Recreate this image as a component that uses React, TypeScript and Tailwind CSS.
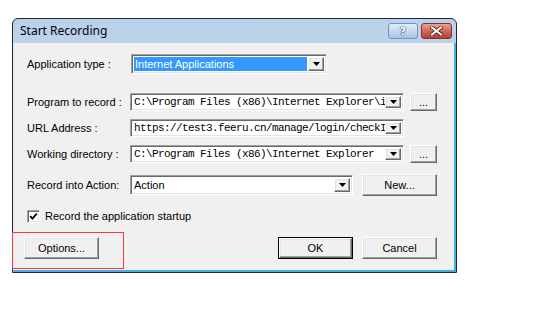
import React from 'react';

const sunken =
  'border border-t-[#a0a0a0] border-l-[#a0a0a0] border-r-white border-b-white shadow-[inset_1px_1px_0_#696969,inset_-1px_-1px_0_#e3e3e3]';
const raised =
  'border border-t-white border-l-white border-r-[#696969] border-b-[#696969] shadow-[inset_-1px_-1px_0_#a0a0a0,inset_1px_1px_0_#e3e3e3] bg-[#f0f0f0]';

const Arrow: React.FC = () => (
  <div className={`${raised} w-[16px] h-full flex items-center justify-center shrink-0`}>
    <svg width="7" height="4" viewBox="0 0 7 4">
      <path d="M0 0H7L3.5 4Z" fill="#000" />
    </svg>
  </div>
);

const Combo: React.FC<{ text: string; mono?: boolean; w: string; h?: string; selected?: boolean }> = ({
  text,
  mono,
  w,
  h = 'h-[18px]',
  selected,
}) => (
  <div className={`${sunken} ${w} ${h} bg-white flex p-[2px] shrink-0`}>
    <div
      className={`flex-1 min-w-0 overflow-hidden whitespace-nowrap flex items-center ${
        selected ? 'bg-[#3399ff] text-white mr-[1px] pl-[1px]' : 'text-black pl-[1px]'
      } ${mono ? "font-['Liberation_Mono',monospace] text-[11px] tracking-[-0.6px]" : ''}`}
    >
      {text}
    </div>
    <Arrow />
  </div>
);

const Button: React.FC<{ label: string; w?: string; h?: string; def?: boolean }> = ({
  label,
  w = 'w-[75px]',
  h = 'h-[22px]',
  def,
}) =>
  def ? (
    <div className={`${w} ${h} border border-black flex shrink-0`}>
      <div className={`${raised} flex-1 flex items-center justify-center`}>{label}</div>
    </div>
  ) : (
    <div className={`${raised} ${w} ${h} flex items-center justify-center shrink-0`}>{label}</div>
  );

const Label: React.FC<{ children: React.ReactNode }> = ({ children }) => (
  <div className="w-[103px] shrink-0 whitespace-nowrap">{children}</div>
);

export default function App() {
  return (
    <div className="w-[539px] h-[315px] bg-white pt-[18px] pl-[12px] font-['Liberation_Sans',Arial,sans-serif] text-[11px] text-black">
      {/* Window */}
      <div className="w-[445px] h-[255px] border border-[#222a33] rounded-t-[6px] flex flex-col bg-gradient-to-b from-[#b9d1ea] to-[#d5e3f2]">
        {/* Title bar */}
        <div className="h-[24px] flex items-start shrink-0">
          <div className="pl-[7px] pt-[4px] font-['Noto_Sans',sans-serif] text-[12px] leading-[16px] text-black flex-1">
            Start Recording
          </div>
          <div className="flex gap-[3px] pt-[4px] pr-[4px]">
            <div className="w-[30px] h-[16px] rounded-[3px] border border-[#7590b8] bg-gradient-to-b from-[#e4edf8] via-[#c5d7ee] to-[#a9c3e4] flex items-center justify-center">
              <span className="font-['DejaVu_Sans',sans-serif] font-bold text-[11px] leading-none text-white [text-shadow:0_0_1px_#2c3f5e,0_0_1px_#2c3f5e,0_0_1px_#2c3f5e]">
                ?
              </span>
            </div>
            <div className="w-[31px] h-[16px] rounded-[3px] border border-[#7a3530] bg-gradient-to-b from-[#e8a496] via-[#d0685a] to-[#b8402f] flex items-center justify-center">
              <svg width="13" height="10" viewBox="0 0 13 10">
                <path d="M2 1.5L11 8.5M11 1.5L2 8.5" stroke="#4a1d18" strokeWidth="3.6" strokeLinecap="square" />
                <path d="M2 1.5L11 8.5M11 1.5L2 8.5" stroke="#fff" strokeWidth="2" strokeLinecap="square" />
              </svg>
            </div>
          </div>
        </div>

        {/* Client area */}
        <div className="flex-1 bg-[#f0f0f0] border-l border-l-[#dce8f5] border-r-2 border-r-[#45aee6] border-b-2 border-b-[#45aee6] pl-[13px] pt-[11px] flex flex-col">
          <div className="flex items-center h-[20px]">
            <Label>Application type :</Label>
            <div className="pl-[1px]">
              <Combo text="Internet Applications" w="w-[196px]" h="h-[20px]" selected />
            </div>
          </div>

          <div className="flex items-center h-[18px] mt-[19px]">
            <Label>Program to record :</Label>
            <Combo text="C:\Program Files (x86)\Internet Explorer\i" mono w="w-[274px]" />
            <div className="ml-[6px]">
              <Button label="..." w="w-[27px]" h="h-[18px]" />
            </div>
          </div>

          <div className="flex items-center h-[18px] mt-[8px]">
            <Label>URL Address :</Label>
            <Combo text="https://test3.feeru.cn/manage/login/checkI" mono w="w-[274px]" />
          </div>

          <div className="flex items-center h-[18px] mt-[8px]">
            <Label>Working directory :</Label>
            <Combo text="C:\Program Files (x86)\Internet Explorer" mono w="w-[274px]" />
            <div className="ml-[6px]">
              <Button label="..." w="w-[27px]" h="h-[18px]" />
            </div>
          </div>

          <div className="flex items-center h-[22px] mt-[11px]">
            <Label>Record into Action:</Label>
            <Combo text="Action" w="w-[223px]" h="h-[20px]" />
            <div className="ml-[9px]">
              <Button label="New..." />
            </div>
          </div>

          <div className="flex items-center mt-[14px] h-[13px]">
            <div className={`${sunken} w-[13px] h-[13px] bg-white flex items-center justify-center`}>
              <svg width="9" height="9" viewBox="0 0 9 9">
                <path d="M1.2 4.2L3.4 6.6L7.8 1.6" stroke="#000" strokeWidth="1.8" fill="none" />
              </svg>
            </div>
            <span className="ml-[5px]">Record the application startup</span>
          </div>

          <div className="flex items-center mt-[14px] h-[22px]">
            <div className="relative -ml-[3px]">
              <Button label="Options..." />
              <div className="absolute left-[-12px] top-[-5px] w-[112px] h-[37px] border border-[#ee3b3b] pointer-events-none" />
            </div>
            <div className="ml-[179px]">
              <Button label="OK" def />
            </div>
            <div className="ml-[9px]">
              <Button label="Cancel" />
            </div>
          </div>
        </div>
      </div>
    </div>
  );
}
